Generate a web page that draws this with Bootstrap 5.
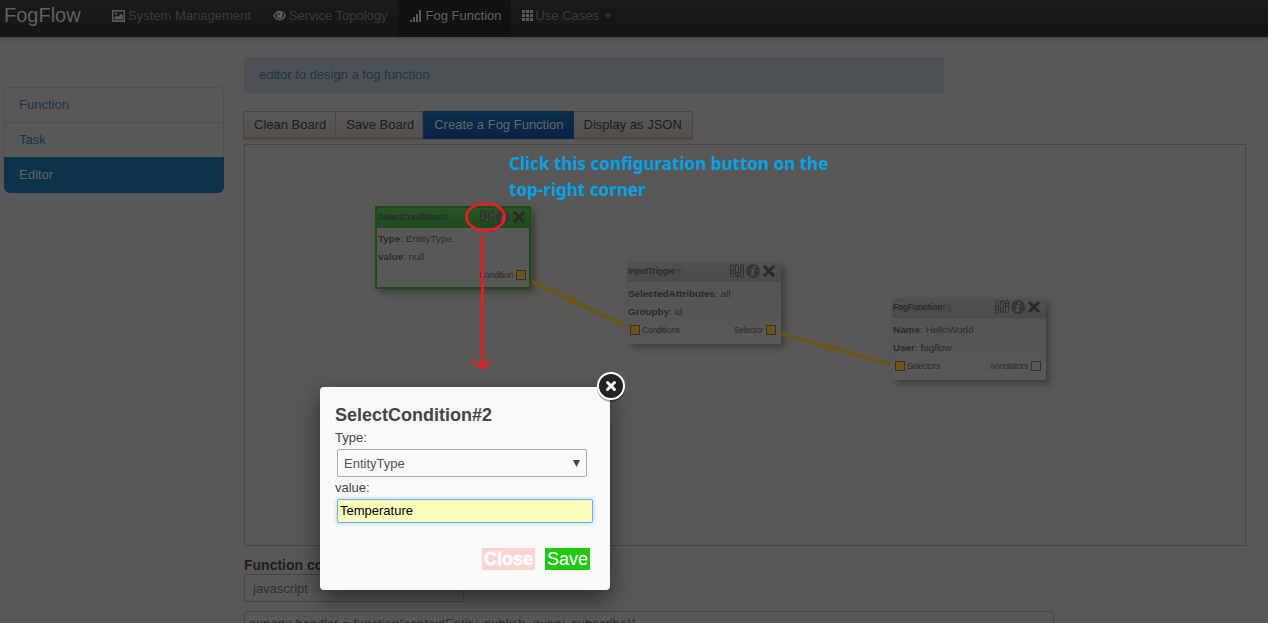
<!DOCTYPE html>
<html lang="en">
<head>
<meta charset="utf-8">
<title>FogFlow</title>
<link href="https://cdn.jsdelivr.net/npm/bootstrap@5.3.0/dist/css/bootstrap.min.css" rel="stylesheet">
<style>
body{background:#5a5856;color:#1e1d1c;font:13px/20px "Liberation Sans",Arial,sans-serif;height:623px;overflow:hidden;position:relative}
.topbar{height:37px;background:linear-gradient(#1b1a19,#161513);box-shadow:0 1px 4px #3f3e3c;padding:0}
.topbar .navbar-brand{font-size:20px;line-height:20px;color:#63615f;margin:0;padding:5px 0 0 4px;width:105px;height:37px}
.topbar .nav-link{color:#3b3a38;padding:6px 10px 11px 11px;line-height:20px;height:37px;white-space:nowrap;font-size:13px}
.topbar .nav-link.active{color:#646260;background:#121110}
.topbar svg{fill:#5c5a58;display:block;margin:-1px -1px 0 1px}
.caret{border:4px solid transparent;border-top-color:#353432;border-bottom:0;margin-left:5px}
main{height:586px;overflow:hidden}
.sidecol{width:220px;margin:50px 20px 0 4px}
.sidecol .list-group{--bs-list-group-bg:transparent;--bs-list-group-border-color:#504e4c;--bs-list-group-border-radius:6px;--bs-list-group-color:#173449}
.sidecol .list-group-item{padding:7px 14px;height:35px;color:#173449;line-height:20px}
.sidecol .list-group-item:first-child{height:36px}
.sidecol .list-group-item:last-child{height:36px}
.sidecol .list-group-item.active{background:#0d334a;border-color:#0d334a;color:#666462}
.tip{width:700px;height:36px;margin-top:20px;padding:7px 14px;background:#4d5153;border:1px solid #465154;border-radius:4px;color:#1d3543}
.tools{margin:18px 0 5px -1px}
.tools .btn{font-size:13px;line-height:20px;padding:3px 10px 3px;height:28px;border:1px solid #484644;border-bottom-color:#403e3c;border-radius:0;color:#1c1b1a;background:linear-gradient(#5a5856,#524f4d);box-shadow:0 1px 1px #504e4c}
.tools .btn:first-child{border-radius:3px 0 0 3px;padding-right:9px}
.tools .btn:nth-child(2){padding-right:8px}
.tools .btn:last-child{border-radius:0 2px 2px 0}
.tools .btn-main{color:#67696b;background:linear-gradient(#0b3148,#0a2147);border-color:#0b2b48;padding-right:9px}
.board{width:1002px;height:402px;border:1px solid #484644;position:relative}
.board>svg{position:absolute;left:-1px;top:-1px;z-index:1}
.node{position:absolute;width:154px;height:82px;font-size:9.9px;line-height:18px;background:linear-gradient(#555351,#5a5856);box-shadow:4px 4px 6px #403f3d;color:#2b2a29}
.node.chosen{border:2px solid #1c4a1b;width:156px;height:83px;background:#5a5856}
.nhead{height:20px;font-size:8.5px;letter-spacing:-.2px;padding:0 4px 2px 1px;background:linear-gradient(#535150,#4c4a48);line-height:18px}
.chosen .nhead{background:linear-gradient(#2a5528,#1d4920);padding-right:2px}
.nhead span{color:#413f3d}
.chosen .nhead span{color:#17381a}
.port{display:inline-block;width:10px;height:10px;border:1px solid #33312d;background:#6c5412}
.port.free{background:none}
.pins{font-size:8.5px;letter-spacing:-.25px;line-height:12px;height:14px;margin-top:2px}
.note{position:absolute;left:264px;top:5px;font:bold 18px/26px "Noto Sans","Open Sans",sans-serif;color:#00a2e8;white-space:nowrap;transform:scaleX(.947);transform-origin:0 0}
.lang{width:220px;height:28px;border:1px solid #474543;padding:4px 8px;line-height:20px;color:#302f2e}
.code{width:810px;height:60px;margin-top:9px;border:1px solid #484644;border-radius:4px;padding:2px 4px;color:#2d2c2b}
.dialog{position:absolute;z-index:5;left:320px;top:387px;width:290px;height:203px;padding:15px;background:#f9f9f9;border-radius:4px;box-shadow:0 9px 22px rgba(0,0,0,.5);color:#444}
.dialog h3{font-size:18px;line-height:24px;font-weight:bold;margin:1px 0 0;color:#444}
.dialog label{display:block;height:20px;line-height:21px}
.pick{width:250px;height:28px;margin:2px 0 0 2px;border:1px solid #aaa;border-radius:2px;padding:1px 6px 0;color:#555}
.entry{width:256px;height:24px;margin:2px 0 0 2px;padding:0 2px;border:1px solid #6cb4e2;border-radius:2px;background:#faffbd;color:#000;box-shadow:0 0 5px #a7d2ee;line-height:21px}
.acts{margin:25px 5px 0 0;font-size:18px;line-height:22px}
.acts span{height:22px;padding:0 2px;color:#fff;background:#20c80e}
.acts .off{background:#fbd3d3;color:#fcfafa;font-weight:bold;-webkit-text-stroke:.8px #fcfafa}
.shut{position:absolute;left:274px;top:-18px}
</style>
</head>
<body>
<svg width="0" height="0" class="position-absolute">
<symbol id="nodeicons" viewBox="0 0 48 16">
<g stroke="#33312f" stroke-width="1" fill="none"><rect x="1.500" y="1.500" width="3" height="12.500" rx="1.500"/><rect x="6.500" y="1.500" width="3" height="12.500" rx="1.500"/><rect x="11.500" y="1.500" width="3" height="12.500" rx="1.500"/></g>
<g fill="#4d4b49" stroke="#33312f"><circle cx="3" cy="9" r="1.700"/><circle cx="8" cy="11" r="1.700"/><circle cx="13" cy="6" r="1.700"/></g>
<circle cx="24" cy="8" r="7" fill="#383635"/>
<path d="M24.300 3.200h2.200l-.5 2h-2.200zM22.400 6.300h3.200l-1.400 4.800h1.200l-.3 1.300h-3.400l1.300-4.800h-1z" fill="#555351"/>
<path d="M35 3l10 10M45 3L35 13" stroke="#2c2a29" stroke-width="3"/>
</symbol>
</svg>
<nav class="navbar topbar d-flex flex-nowrap justify-content-start">
<a class="navbar-brand">FogFlow</a>
<div class="d-flex">
<a class="nav-link d-flex align-items-center" style="padding-left:6px"><svg width="13" height="12" viewBox="0 0 13 12"><path fill-rule="evenodd" d="M0 0h13v12H0zM1.500 1.500v8.800h10V1.500zM2.300 9.500V7.500L4.500 5.500 6 7 9 3.500 10.800 5.500V9.500zM3 2.500h2v2H3z"/></svg><span class="ms-1">System Management</span></a>
<a class="nav-link d-flex align-items-center"><svg width="13" height="11" viewBox="0 0 13 11"><path fill-rule="evenodd" d="M0 5.500C3-1 10-1 13 5.500 10 12 3 12 0 5.500zM1.700 5.500C4 10 9 10 11.300 5.500 10.500 4 9.700 3 9 2.600 10.500 6 8.500 8.300 6.500 8.300S2.500 6 4 2.600C3.200 3 2.500 4 1.700 5.500z"/><circle cx="6.500" cy="5" r="2.200"/><circle cx="5.800" cy="4" r=".9" fill="#222"/></svg><span class="ms-1">Service Topology</span></a>
<a class="nav-link active d-flex align-items-center"><svg width="12" height="12" viewBox="0 0 12 12"><path d="M0 10h2v2H0zM3 7h2v5H3zM6 4h2v8H6zM9 0h2v12H9z"/></svg><span style="margin-left:5px">Fog Function</span></a>
<a class="nav-link d-flex align-items-center" style="padding-left:10px"><svg width="12" height="11" viewBox="0 0 12 11"><path d="M0 0h3v3H0zM4 0h3v3H4zM8 0h3v3H8zM0 4h3v3H0zM4 4h3v3H4zM8 4h3v3H8zM0 8h3v3H0zM4 8h3v3H4zM8 8h3v3H8z"/></svg><span style="margin-left:2px">Use Cases</span><i class="caret"></i></a>
</div>
</nav>
<main class="d-flex align-items-start">
<aside class="sidecol flex-shrink-0"><div class="list-group">
<a class="list-group-item">Function</a><a class="list-group-item">Task</a><a class="list-group-item active">Editor</a>
</div></aside>
<section>
<div class="tip">editor to design a fog function</div>
<div class="tools d-flex"><button class="btn">Clean Board</button><button class="btn border-start-0">Save Board</button><button class="btn btn-main">Create a Fog Function</button><button class="btn border-start-0">Display as JSON</button></div>
<div class="board">
<svg width="1002" height="402" viewBox="244 144 1002 402" fill="none" stroke="#705509" stroke-width="2.500"><path d="M532 281.500L626 326M781 334L890 364"/><path stroke-width="1.500" d="M570 295l8 8-11 1M828 342l8 6-10 4"/></svg>
<div class="node chosen" style="left:130px;top:61px">
<div class="nhead d-flex align-items-center"><b>SelectCondition</b><span class="flex-grow-1">#2</span><svg width="48" height="16"><use href="#nodeicons"/></svg></div>
<div style="padding-left:1px;padding-top:2px"><b>Type</b>: EntityType<br><b>value</b>: null</div>
<div class="pins d-flex justify-content-end align-items-center" style="padding-right:3px">Condition<i class="port" style="margin-left:3px"></i></div>
</div>
<div class="node" style="left:382px;top:117px">
<div class="nhead d-flex align-items-center"><b>InputTrigger</b><span class="flex-grow-1">#3</span><svg width="48" height="16"><use href="#nodeicons"/></svg></div>
<div style="padding:3px 0 0 1px"><b>SelectedAttributes</b>: all<br><b>Groupby</b>: id</div>
<div class="pins d-flex align-items-center" style="padding:0 5px 0 3px"><i class="port" style="margin-right:2px"></i><span class="flex-grow-1">Conditions</span>Selector<i class="port" style="margin-left:3px"></i></div>
</div>
<div class="node" style="left:647px;top:153px">
<div class="nhead d-flex align-items-center"><b>FogFunction</b><span class="flex-grow-1">#1</span><svg width="48" height="16"><use href="#nodeicons"/></svg></div>
<div style="padding:3px 0 0 1px"><b>Name</b>: HelloWorld<br><b>User</b>: fogflow</div>
<div class="pins d-flex align-items-center" style="padding:0 5px 0 3px"><i class="port" style="margin-right:2px"></i><span class="flex-grow-1">Selectors</span>Annotators<i class="port free" style="margin-left:3px"></i></div>
</div>
<svg width="1002" height="402" viewBox="244 144 1002 402" fill="none" stroke="#ed1c24" stroke-width="2.700"><ellipse cx="485.500" cy="217" rx="19" ry="13.500"/><path d="M482.500 236v132M472 360.500l10.500 7.500 8.500-7.500"/></svg>
<div class="note">Click this configuration button on the<br>top-right corner</div>
</div>
<div class="fw-bold" style="font-size:14px;height:28px;padding-top:9px">Function code:</div>
<div class="lang">javascript</div>
<div class="code">exports.handler = function(contextEntity, publish, query, subscribe){</div>
</section>
</main>
<div class="dialog">
<h3>SelectCondition#2</h3>
<label>Type:</label>
<div class="pick d-flex align-items-center justify-content-between"><span>EntityType</span><svg width="7" height="8"><path d="M0 0h7L3.500 7z" fill="#444"/></svg></div>
<label>value:</label>
<div class="entry">Temperature</div>
<div class="acts d-flex justify-content-end"><span class="off">Close</span><span style="margin-left:10px">Save</span></div>
<svg class="shut" width="34" height="36"><circle cx="17" cy="19" r="14" fill="#000" opacity=".3"/><circle cx="17" cy="17" r="13" fill="#222" stroke="#fff" stroke-width="2"/><path d="M13.500 13.500l7 7M20.500 13.500l-7 7" stroke="#fff" stroke-width="3" stroke-linecap="round"/></svg>
</div>
<script src="https://cdn.jsdelivr.net/npm/bootstrap@5.3.0/dist/js/bootstrap.bundle.min.js"></script>
</body>
</html>
